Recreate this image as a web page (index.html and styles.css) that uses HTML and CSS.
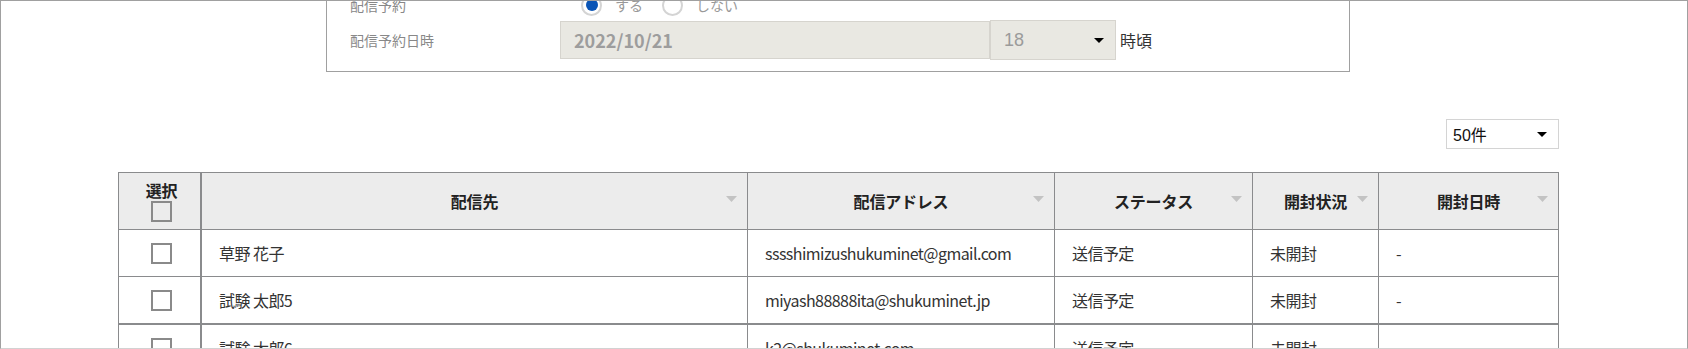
FILE: index.html
```html
<!DOCTYPE html>
<html lang="ja">
<head>
<meta charset="utf-8">
<title>配信予約</title>
<link rel="stylesheet" href="styles.css">
</head>
<body>
<div class="frame">
  <div class="page">
    <section class="card">
      <div class="form-row radio-row">
        <div class="label">配信予約</div>
        <div class="radios">
          <label class="radio"><span class="dot on"></span>する</label>
          <label class="radio"><span class="dot"></span>しない</label>
        </div>
      </div>
      <div class="form-row date-row">
        <div class="label">配信予約日時</div>
        <div class="date-input">2022/10/21</div>
        <div class="select hour">18<svg class="caret" width="10" height="5" viewBox="0 0 10 5"><path d="M0 0H10L5 5Z"/></svg></div>
        <span class="unit">時頃</span>
      </div>
    </section>

    <div class="toolbar">
      <div class="select per-page">50件<svg class="caret" width="10" height="5" viewBox="0 0 10 5"><path d="M0 0H10L5 5Z"/></svg></div>
    </div>

    <table class="list">
      <colgroup>
        <col class="c-sel"><col class="c-name"><col class="c-addr"><col class="c-status"><col class="c-open"><col class="c-date">
      </colgroup>
      <thead>
        <tr>
          <th class="sel-head"><div class="sel-title">選択</div><span class="check"></span></th>
          <th><div class="th-inner"><span></span><span class="th-text">配信先</span><svg class="sort" width="11" height="6" viewBox="0 0 11 6"><path d="M0 0H11L5.5 6Z"/></svg></div></th>
          <th><div class="th-inner"><span></span><span class="th-text">配信アドレス</span><svg class="sort" width="11" height="6" viewBox="0 0 11 6"><path d="M0 0H11L5.5 6Z"/></svg></div></th>
          <th><div class="th-inner"><span></span><span class="th-text">ステータス</span><svg class="sort" width="11" height="6" viewBox="0 0 11 6"><path d="M0 0H11L5.5 6Z"/></svg></div></th>
          <th><div class="th-inner"><span></span><span class="th-text">開封状況</span><svg class="sort" width="11" height="6" viewBox="0 0 11 6"><path d="M0 0H11L5.5 6Z"/></svg></div></th>
          <th><div class="th-inner"><span></span><span class="th-text">開封日時</span><svg class="sort" width="11" height="6" viewBox="0 0 11 6"><path d="M0 0H11L5.5 6Z"/></svg></div></th>
        </tr>
      </thead>
      <tbody>
        <tr>
          <td class="sel"><span class="check"></span></td>
          <td>草野 花子</td>
          <td>sssshimizushukuminet@gmail.com</td>
          <td>送信予定</td>
          <td>未開封</td>
          <td>-</td>
        </tr>
        <tr class="group-end">
          <td class="sel"><span class="check"></span></td>
          <td>試験 太郎5</td>
          <td>miyash88888ita@shukuminet.jp</td>
          <td>送信予定</td>
          <td>未開封</td>
          <td>-</td>
        </tr>
        <tr>
          <td class="sel"><span class="check"></span></td>
          <td>試験 太郎6</td>
          <td>k2@shukuminet.com</td>
          <td>送信予定</td>
          <td>未開封</td>
          <td>-</td>
        </tr>
      </tbody>
    </table>
  </div>
</div>
</body>
</html>
```

FILE: styles.css
```css
* {
  box-sizing: border-box;
  margin: 0;
  padding: 0;
}

html,
body {
  background: #fff;
}

body {
  font-family: "Noto Sans CJK JP", "Noto Sans", sans-serif;
  color: #333;
}

.frame {
  width: 1688px;
  height: 349px;
  border: 1px solid #a0a0a0;
  border-bottom-color: #d2d2d2;
  overflow: hidden;
}

.page {
  margin: -22px 0 0 117px;
  width: 1441px;
}

/* ---------- reservation card ---------- */
.card {
  margin-left: 208px;
  width: 1024px;
  border: 1px solid #a0a0a0;
  padding: 10px 0 11px 23px;
}

.form-row {
  display: flex;
  align-items: center;
}

.radio-row {
  height: 30px;
}

.date-row {
  height: 40px;
}

.label {
  width: 210px;
  font-size: 14px;
  color: #888;
}

.radios {
  display: flex;
  align-items: center;
  padding-left: 21px;
  font-size: 14px;
  color: #999;
}

.radio {
  display: flex;
  align-items: center;
  gap: 13px;
  margin-right: 19px;
}

.dot {
  width: 21px;
  height: 21px;
  border-radius: 50%;
  border: 2px solid #d4d4d4;
  background: #fff;
  display: flex;
  align-items: center;
  justify-content: center;
}

.dot.on::after {
  content: "";
  width: 12px;
  height: 12px;
  border-radius: 50%;
  background: #0b55b6;
}

.date-input {
  width: 430px;
  height: 38px;
  background: #e9e8e2;
  border: 1px solid #d6d4ce;
  padding-left: 13px;
  display: flex;
  align-items: center;
  font-size: 18px;
  font-weight: 700;
  color: #9d9d9d;
}

.select {
  display: flex;
  align-items: center;
  justify-content: space-between;
  font-family: "Liberation Sans", "Noto Sans CJK JP", sans-serif;
}

.select.hour {
  width: 126px;
  height: 40px;
  background: #e9e8e2;
  border: 1px solid #d6d4ce;
  padding: 0 11px 0 13px;
  font-size: 18px;
  color: #9b9b9b;
}

.caret {
  fill: #000;
  flex: none;
}

.unit {
  margin-left: 4px;
  font-size: 16px;
  color: #333;
}

/* ---------- toolbar ---------- */
.toolbar {
  display: flex;
  justify-content: flex-end;
  margin: 47px 0 23px;
}

.select.per-page {
  width: 113px;
  height: 30px;
  border: 1px solid #d4d4d4;
  background: #fff;
  padding: 0 11px 0 6px;
  font-size: 16px;
  color: #111;
}

/* ---------- table ---------- */
.list {
  width: 1441px;
  table-layout: fixed;
  border-collapse: separate;
  border-spacing: 0;
  border-top: 1px solid #8a8b8d;
  border-left: 1px solid #8a8b8d;
}

.c-sel { width: 83px; }
.c-name { width: 546px; }
.c-addr { width: 307px; }
.c-status { width: 198px; }
.c-open { width: 126px; }
.c-date { width: 180px; }

.list th,
.list td {
  border-right: 1px solid #8a8b8d;
  border-bottom: 1px solid #8a8b8d;
}

.list th:first-child,
.list td:first-child {
  border-right-width: 2px;
}

.list thead tr {
  height: 57px;
}

.list tbody tr {
  height: 47px;
}

.list tbody tr.group-end {
  height: 48px;
}

.list tbody tr.group-end td {
  border-bottom-width: 2px;
}

.list th {
  background: #ececec;
  font-size: 16px;
  font-weight: 700;
  color: #222;
  padding: 0 10px;
  vertical-align: middle;
  letter-spacing: -0.2px;
}

.list th.sel-head {
  padding: 0 0 0 4px;
}

.sel-title {
  line-height: 20px;
  text-align: center;
}

.th-inner {
  display: grid;
  grid-template-columns: 1fr auto 1fr;
  align-items: center;
}

.sort {
  justify-self: end;
  fill: #c3c3c3;
  margin-bottom: 4px;
}

.check {
  display: block;
  width: 21px;
  height: 21px;
  margin: 1px auto 0;
  border: 2px solid #8a8a8a;
  background: transparent;
}

.list td {
  font-size: 16px;
  color: #333;
  padding-left: 17px;
  vertical-align: middle;
  white-space: nowrap;
  letter-spacing: -0.55px;
}

.list td.sel {
  padding-left: 4px;
}

.list td.sel .check {
  margin: 0 auto;
  background: #fff;
}
```
